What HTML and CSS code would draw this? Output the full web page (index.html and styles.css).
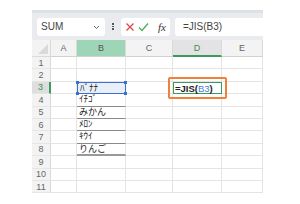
FILE: index.html
```html
<!DOCTYPE html>
<html>
	<head>
		<meta charset="UTF-8">
		<title>JIS関数</title>
		<link rel="stylesheet" href="styles.css">
	</head>
	<body>
		<div class="sheet">
			<div class="fbar">
				<div class="namebox">
					<span>SUM</span>
					<svg class="chev" width="7" height="5" viewBox="0 0 7 5"><path d="M1 1 L3.5 3.5 L6 1" fill="none" stroke="#666" stroke-width="1"/></svg>
				</div>
				<div class="dots"><i></i><i></i><i></i></div>
				<div class="btns">
					<svg width="10" height="10" viewBox="0 0 10 10"><path d="M1.5 1.5 L8.5 8.5 M8.5 1.5 L1.5 8.5" stroke="#e04848" stroke-width="1.3" fill="none"/></svg>
					<svg width="11" height="10" viewBox="0 0 11 10"><path d="M1 5.5 L4 8.5 L10 1.5" stroke="#4caf50" stroke-width="1.3" fill="none"/></svg>
					<span class="fx">fx</span>
				</div>
				<div class="finput">=JIS(B3)</div>
			</div>

			<div class="grid">
				<div class="corner"><svg width="12" height="12" viewBox="0 0 12 12"><path d="M12 2 L12 12 L2 12 Z" fill="#d9d9d9"/></svg></div>
				<div class="ch">A</div>
				<div class="ch sel">B</div>
				<div class="ch">C</div>
				<div class="ch act">D</div>
				<div class="ch">E</div>

				<div class="rh">1</div><div class="c"></div><div class="c"></div><div class="c"></div><div class="c"></div><div class="c"></div>
				<div class="rh">2</div><div class="c"></div><div class="c"></div><div class="c"></div><div class="c"></div><div class="c"></div>
				<div class="rh act">3</div><div class="c"></div>
				<div class="c b3">ﾊﾞﾅﾅ<i class="h tl"></i><i class="h tr"></i><i class="h bl"></i><i class="h br"></i></div>
				<div class="c"></div>
				<div class="c d3"><span class="edit">=JIS(<b>B3</b>)</span><span class="mark"></span></div>
				<div class="c"></div>
				<div class="rh">4</div><div class="c"></div><div class="c u">ｲﾁｺﾞ</div><div class="c"></div><div class="c"></div><div class="c"></div>
				<div class="rh">5</div><div class="c"></div><div class="c u">みかん</div><div class="c"></div><div class="c"></div><div class="c"></div>
				<div class="rh">6</div><div class="c"></div><div class="c u">ﾒﾛﾝ</div><div class="c"></div><div class="c"></div><div class="c"></div>
				<div class="rh">7</div><div class="c"></div><div class="c u">ｷｳｲ</div><div class="c"></div><div class="c"></div><div class="c"></div>
				<div class="rh">8</div><div class="c"></div><div class="c u last">りんご</div><div class="c"></div><div class="c"></div><div class="c"></div>
				<div class="rh">9</div><div class="c"></div><div class="c"></div><div class="c"></div><div class="c"></div><div class="c"></div>
				<div class="rh">10</div><div class="c"></div><div class="c"></div><div class="c"></div><div class="c"></div><div class="c"></div>
				<div class="rh">11</div><div class="c"></div><div class="c"></div><div class="c"></div><div class="c"></div><div class="c"></div>
			</div>
		</div>
	</body>
</html>
```

FILE: styles.css
```css
html,body,div,span {
	margin: 0;
	padding: 0;
}
body {
	background-color: #fff;
	font-family: "Liberation Sans", "Noto Sans CJK JP", sans-serif;
	color: #333;
}

.sheet {
	width: 231px;
	margin: 10px 0 0 32px;
}

/* formula bar */
.fbar {
	height: 27px;
	border-top: 3px solid #dde0e4;
	background-color: #e9ebee;
	display: flex;
	align-items: center;
	padding-left: 5px;
}
.namebox {
	width: 68px;
	height: 18px;
	background-color: #fff;
	border-radius: 3px;
	display: flex;
	align-items: center;
	justify-content: space-between;
	padding: 0 5px 0 4px;
	box-sizing: border-box;
	font-size: 10px;
	color: #444;
}
.namebox .chev {
	margin-top: 1px;
}
.dots {
	width: 16px;
	display: flex;
	flex-direction: column;
	align-items: center;
	gap: 1px;
}
.dots i {
	display: block;
	width: 1.5px;
	height: 1.5px;
	background-color: #555;
}
.btns {
	width: 49px;
	height: 18px;
	background-color: #fff;
	border-radius: 3px;
	display: flex;
	align-items: center;
	gap: 3px;
	padding-left: 4px;
	box-sizing: border-box;
}
.btns .fx {
	margin-left: 6px;
	font-family: "Liberation Serif", serif;
	font-style: italic;
	font-size: 11px;
	color: #333;
}
.finput {
	width: 88px;
	height: 18px;
	margin-left: 5px;
	background-color: #fff;
	border-radius: 3px 0 0 3px;
	font-size: 10px;
	line-height: 18px;
	padding-left: 8px;
	box-sizing: border-box;
	color: #444;
}

/* grid */
.grid {
	display: grid;
	grid-template-columns: 19px 26px 49px 47px 49px 41px;
	grid-template-rows: 17px repeat(11, 12.4px);
}
.corner,.ch,.rh {
	background-color: #f3f3f3;
	box-sizing: border-box;
	color: #666;
	font-size: 9px;
}
.corner {
	border-right: 1px solid #dadada;
	border-bottom: 1px solid #dadada;
	display: flex;
	align-items: flex-end;
	justify-content: flex-end;
	padding: 0 2px 2px 0;
}
.ch {
	border-right: 1px solid #dadada;
	border-bottom: 1px solid #d0d0d0;
	display: flex;
	align-items: center;
	justify-content: center;
}
.ch.sel {
	background-color: #9fd5b7;
	color: #555;
}
.ch.act {
	background-color: #e3e3e3;
	border-bottom: 2px solid #3c9a5f;
	color: #3c8f5a;
}
.rh {
	border-right: 1px solid #dadada;
	border-bottom: 1px solid #e6e6e6;
	display: flex;
	align-items: center;
	justify-content: center;
	font-size: 9px;
}
.rh.act {
	background-color: #dedede;
	border-right: 2px solid #3c9a5f;
	color: #3c8f5a;
}
.c {
	border-right: 1px solid #e4e4e4;
	border-bottom: 1px solid #e4e4e4;
	box-sizing: border-box;
	font-size: 9px;
	line-height: 11px;
	padding-left: 2px;
	color: #222;
	white-space: nowrap;
}
.c.u {
	border-bottom-color: #8a8a8a;
}
.c.u.last {
	border-bottom: 2px solid #999;
}
.b3 {
	position: relative;
	border: 1px solid #3b6fd0;
	background-color: #e9eff9;
}
.b3 .h {
	position: absolute;
	width: 3px;
	height: 3px;
	background-color: #3b6fd0;
}
.b3 .tl { left: -2px; top: -2px; }
.b3 .tr { right: -2px; top: -2px; }
.b3 .bl { left: -2px; bottom: -2px; }
.b3 .br { right: -2px; bottom: -2px; }
.d3 {
	position: relative;
	border: 1px solid #3c9a5f;
	font-weight: bold;
	font-size: 9.5px;
	padding-left: 1px;
}
.d3 b {
	color: #4a80d8;
	font-weight: normal;
}
.d3 .mark {
	position: absolute;
	left: -6px;
	right: -6px;
	top: -6px;
	bottom: -6px;
	border: 2px solid #f0813a;
	border-radius: 2px;
}
```
